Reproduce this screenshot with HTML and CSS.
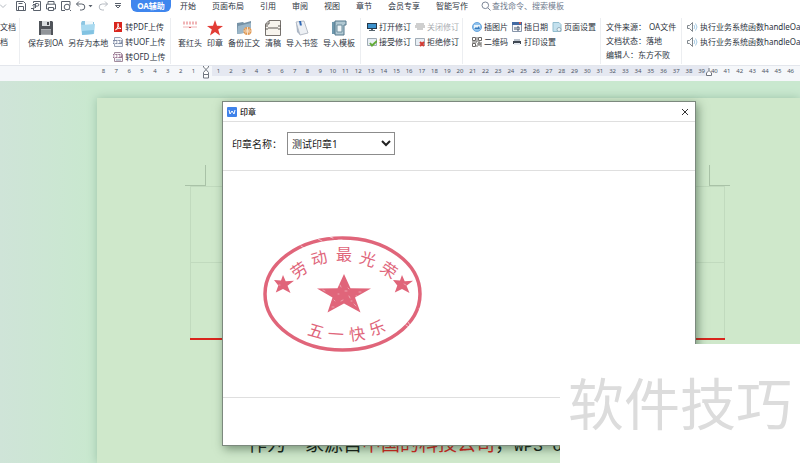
FILE: index.html
```html
<!DOCTYPE html>
<html lang="zh">
<head>
<meta charset="utf-8">
<title>印章</title>
<link rel="stylesheet" href="styles.css">
</head>
<body>
<div class="app">
  <header class="topbar">
    <div class="quick">
      <button class="tool" aria-label="展开"><svg width="8" height="12" viewBox="0 0 8 12"><path d="M0 4.500l3 3 3-3" class="ln pale"/></svg></button>
      <button class="tool save" aria-label="保存"><svg width="12" height="12" viewBox="0 0 12 12"><path d="M1.500 1.500h7l2 2v7h-9zM3.500 10.500v-4h5v4M3.500 3.500h4" class="ln"/></svg></button>
      <button class="tool" aria-label="输出"><svg width="12" height="12" viewBox="0 0 12 12"><path d="M3.500 3V1.500h7v9h-7V9M1 8.500h3V5M5.500 8V3.500h2a1.300 1.300 0 0 1 0 2.600h-2M2.500 5.500l1.500-1.500 1.500 1.500" class="ln"/></svg></button>
      <button class="tool" aria-label="打印"><svg width="12" height="12" viewBox="0 0 12 12"><path d="M3 4V1.500h6V4M3 9H1.500V4.200h9V9H9M3.500 7.500h5v3h-5z" class="ln"/></svg></button>
      <button class="tool" aria-label="打印预览"><svg width="12" height="12" viewBox="0 0 12 12"><path d="M5 10.500H1.500v-9h8.500v4M9.500 9.500l1.500 1.500" class="ln"/><circle cx="7" cy="7" r="2.800" class="ln"/></svg></button>
      <button class="tool" aria-label="撤销"><svg width="12" height="12" viewBox="0 0 12 12"><path d="M4 1.500L1.500 4 4 6.500M1.500 4h5.300a3 3 0 0 1 0 6H5" class="ln"/></svg></button>
      <button class="tool" aria-label="撤销列表"><svg width="5" height="12" viewBox="0 0 5 12"><path d="M.500 5h4l-2 2.300z" fill="#59606b"/></svg></button>
      <button class="tool redo" aria-label="恢复"><svg width="12" height="12" viewBox="0 0 12 12"><path d="M8 1.500L10.500 4 8 6.500M10.500 4H5.200a3 3 0 0 0 0 6H7" class="ln pale"/></svg></button>
      <button class="tool more" aria-label="更多"><svg width="8" height="12" viewBox="0 0 8 12"><path d="M1 3.500h6M1.500 5.500h5L4 8z" class="ln thin"/></svg></button>
    </div>
    <nav class="tabs">
      <a href="#oa" class="tab active">OA辅助</a>
      <a href="#home" class="tab">开始</a>
      <a href="#layout" class="tab">页面布局</a>
      <a href="#refs" class="tab">引用</a>
      <a href="#review" class="tab">审阅</a>
      <a href="#view" class="tab">视图</a>
      <a href="#section" class="tab">章节</a>
      <a href="#vip" class="tab">会员专享</a>
      <a href="#smart" class="tab">智能写作</a>
    </nav>
    <label class="search">
      <svg width="10" height="10" viewBox="0 0 10 10"><circle cx="4.300" cy="4.300" r="3.300" class="ln soft"/><path d="M6.800 6.800L9.500 9.500" class="ln soft"/></svg>
      <input type="text" placeholder="查找命令、搜索模板" aria-label="查找命令、搜索模板">
    </label>
  </header>

  <div class="ribbon">
    <div class="group cut">
      <button class="cmd">文档</button>
      <button class="cmd">档</button>
    </div>
    <div class="group files">
      <button class="big"><svg width="16" height="16" viewBox="0 0 16 16"><path d="M1 1h13l1 1v13H1z" fill="#50545a"/><path d="M4 1h8v5H4z" fill="#d9dde0"/><path d="M9 2h2v3H9z" fill="#45494f"/><path d="M3 9h10v6H3z" fill="#aaaeb2"/><path d="M3 11h10M3 13h10" stroke="#777b80"/></svg>保存到OA</button>
      <button class="big"><svg width="16" height="16" viewBox="0 0 16 16"><path d="M1 3l1-2h4l1 1h7v11H2z" fill="#8dc6e2"/><path d="M5 1h8v9H5z" fill="#f2f8fa"/><path d="M1 5l14-1-1 10-12 1z" fill="#a9daf0"/><path d="M2 11l12-1-.400 4L2 15z" fill="#82c3e2"/></svg>另存为本地</button>
      <div class="stack">
        <button class="cmd"><svg width="10" height="10" viewBox="0 0 10 10"><path d="M1 0h8v10H1z" fill="#d9251d"/><path d="M2.500 8C5 6 5.500 3 5 1.500 4.500 4.500 6 6.500 8 6.500 6 6 4 6.500 2.500 8z" class="wl"/></svg>转PDF上传</button>
        <button class="cmd"><svg width="10" height="10" viewBox="0 0 10 10"><path d="M1.500.500h6l2 2v7h-8z" fill="#f4f6fa" stroke="#98a2b5"/><path d="M0 3h9v4H0z" fill="#7f8ba5"/><path d="M1 4v2h1.500V4M4 4h1.500v2H4zM7 6V4h1.500" class="wl"/></svg>转UOF上传</button>
        <button class="cmd"><svg width="10" height="10" viewBox="0 0 10 10"><path d="M1.500.500h6l2 2v7h-8z" fill="#f8f4f7" stroke="#a28b9d"/><path d="M0 2h9v4H0z" fill="#9c7693"/><path d="M1 3h1.500v2H1zM4 5V3h1.500v2zM7 5V3h1.500" class="wl"/><path d="M3 8h5" stroke="#8e9ab5"/></svg>转OFD上传</button>
      </div>
    </div>
    <div class="group inserts">
      <button class="big"><svg width="16" height="16" viewBox="0 0 16 16"><path d="M1 3h14" stroke="#f0b4b6" stroke-width="3" stroke-dasharray="2 1"/><path d="M1 7h14" stroke="#f0b4b6"/><path d="M7 7h2v1H7z" fill="#d96063"/></svg>套红头</button>
      <button class="big"><svg width="16" height="16" viewBox="0 0 16 16"><path d="M8 0l2 5.800 6 .100-4.800 3.700L13 15.500 8 12l-5 3.500 1.800-5.900L0 5.900l6-.100z" fill="#e23c35"/></svg>印章</button>
      <button class="big"><svg width="16" height="16" viewBox="0 0 16 16"><path d="M1 3l6-1 1 1 7-2v11L1 14z" fill="#7692a6"/><path d="M2 6l13-3v9L1 14z" fill="#9bb6c8"/><circle cx="11.500" cy="11" r="4" fill="#df9650"/><path d="M11.500 7v8M7.500 11h8M9 8.500l5 5M14 8.500l-5 5" stroke="#f7dfc5"/></svg>备份正文</button>
      <button class="big"><svg width="16" height="16" viewBox="0 0 16 16"><path d="M.500 4L4 .500h11.500v15H.500z" fill="#f7f4ee" stroke="#77726e"/><path d="M0 6h3M13 6h3M0 9h3M13 9h3M3 8h10M1 4h3V1" fill="none" stroke="#5d5855"/></svg>清稿</button>
      <button class="big"><svg width="16" height="16" viewBox="0 0 16 16"><path d="M2 2l8-1 4 12-8 2z" fill="#edf0f4" stroke="#b7bdc7"/><path d="M2 2l4 13-3-3z" fill="#abb6c5"/><path d="M5 1l2 0 1 5-1-1-1 1z" fill="#2e67b4"/></svg>导入书签</button>
      <button class="big"><svg width="16" height="16" viewBox="0 0 16 16"><path d="M1 2l11-1v13H1z" fill="#6e98ad"/><path d="M4 1h11v4h-2v10H4z" fill="#b0c8d2" stroke="#55798c"/><path d="M6 5h5v7H6z" fill="#eff5f7" stroke="#6c8d9d"/></svg>导入模板</button>
    </div>
    <div class="group grid two">
      <button class="cmd"><svg width="10" height="10" viewBox="0 0 10 10"><path d="M0 1h10v6H0z" fill="#26394c"/><path d="M1 2h8v4H1z" fill="#3b91cc"/><path d="M4 7h2v1h2v1H2V8h2z" fill="#56636d"/></svg>打开修订</button>
      <button class="cmd" disabled><svg width="10" height="10" viewBox="0 0 10 10"><path d="M1 1h8v2H1zM0 3h10v3H0zM2 6h6v2H2z" fill="#cfcfcf"/></svg>关闭修订</button>
      <button class="cmd"><svg width="10" height="10" viewBox="0 0 10 10"><path d="M.500 1.500h9v7h-9z" fill="#e8eff5" stroke="#a0abb5"/><path d="M3 6l2 2.500L10 4" fill="none" stroke="#64ac38" stroke-width="2"/></svg>接受修订</button>
      <button class="cmd"><svg width="10" height="10" viewBox="0 0 10 10"><path d="M.500 1.500h9v7h-9z" fill="#e8eff5" stroke="#a0abb5"/><path d="M5 5l4 4M9 5L5 9" stroke="#d33a32" stroke-width="2"/></svg>拒绝修订</button>
    </div>
    <div class="group grid three">
      <button class="cmd"><svg width="10" height="10" viewBox="0 0 10 10"><circle cx="5" cy="5" r="4.500" fill="#8fc2ee" stroke="#69a5dc"/><path d="M2 3h6v4H2z" fill="#eaf4fb"/><path d="M2 7l2-2 1 1 2-2 1 3z" fill="#357abd"/></svg>插图片</button>
      <button class="cmd"><svg width="10" height="10" viewBox="0 0 10 10"><path d="M.500.500h9v9h-9z" fill="#f6f7fa" stroke="#8795aa"/><path d="M0 0h10v3H0z" fill="#426aa3"/><path d="M7 0h2v2H7z" fill="#d3584b"/><path d="M3 5v3M5 5h2v3H5z" fill="none" stroke="#45546b"/></svg>插日期</button>
      <button class="cmd"><svg width="10" height="10" viewBox="0 0 10 10"><path d="M1 .500h6l2 2v7H1z" fill="#c4e1ee" stroke="#92bdce"/><circle cx="7" cy="7.500" r="2" fill="#ecf5f8" stroke="#92adbb"/></svg>页面设置</button>
      <button class="cmd"><svg width="10" height="10" viewBox="0 0 10 10"><path d="M.500.500h3v3h-3zM6.500.500h3v3h-3zM.500 6.500h3v3h-3zM5 0v5H0M6 6h2v2H6zM9 5v5M5 8v2M6 5h2" fill="none" stroke="#6b6866"/></svg>二维码</button>
      <button class="cmd"><svg width="10" height="10" viewBox="0 0 10 10"><path d="M2 2h6v2H2z" fill="#bac2cc"/><path d="M1 4h8v3H1z" fill="#3f4752"/><path d="M2 6h6v2H2z" fill="#e4e9ef"/></svg>打印设置</button>
    </div>
    <dl class="group info">
      <div><dt>文件来源：</dt><dd class="source">OA文件</dd></div>
      <div><dt>文档状态：</dt><dd>落地</dd></div>
      <div><dt>编辑人：</dt><dd>东方不败</dd></div>
    </dl>
    <div class="group calls">
      <button class="cmd"><svg width="11" height="10" viewBox="0 0 11 10"><path d="M.500 3.500h2l3-3v9l-3-3h-2z" fill="#fafafa" stroke="#81888e"/><path d="M7 3q1.500 2 0 4M8.500 1.500q3 3.500 0 7" fill="none" stroke="#a6cbe4"/></svg>执行业务系统函数handleOaF</button>
      <button class="cmd"><svg width="11" height="10" viewBox="0 0 11 10"><path d="M.500 3.500h2l3-3v9l-3-3h-2z" fill="#fafafa" stroke="#81888e"/><path d="M7 3q1.500 2 0 4M8.500 1.500q3 3.500 0 7" fill="none" stroke="#a6cbe4"/></svg>执行业务系统函数handleOaF</button>
    </div>
  </div>

  <div class="ruler">
    <div class="scale before"><span>8</span><span>7</span><span>6</span><span>5</span><span>4</span><span>3</span><span>2</span><span>1</span></div>
    <svg class="indent" width="8" height="16" viewBox="0 0 8 16"><path d="M1.500.500h5v1.500L4 4.500 1.500 2zM4 4.500l2.500 3v2h-5v-2zM1.500 9.500h5v3.500h-5z" fill="#fff" stroke="#6e747e"/></svg>
    <div class="scale after"><span>1</span><span>2</span><span>3</span><span>4</span><span>5</span><span>6</span><span>7</span><span>8</span><span>9</span><span>10</span><span>11</span><span>12</span><span>13</span><span>14</span><span>15</span><span>16</span><span>17</span><span>18</span><span>19</span><span>20</span><span>21</span><span>22</span><span>23</span><span>24</span><span>25</span><span>26</span><span>27</span><span>28</span><span>29</span><span>30</span><span>31</span><span>32</span><span>33</span><span>34</span><span>35</span><span>36</span><span>37</span><span>38</span><span>39</span><span class="stop">40<svg width="6" height="8" viewBox="0 0 6 8"><path d="M3 0v2.500L.500 5v2.500h5V5L3 2.500" fill="#fff" stroke="#6e747e"/></svg></span><span>41</span><span>42</span><span>43</span><span>44</span><span>45</span><span>46</span></div>
  </div>

  <main class="workspace">
    <article class="sheet">
      <div class="corners"><i class="corner left"></i><i class="corner right"></i></div>
      <div class="frame"><div class="cell"></div><div class="cell"></div></div>
      <p class="body-text">作为一家源自<em>中国的科技公司</em>，<span class="latin">WPS O</span></p>
    </article>
  </main>

  <section class="dialog" role="dialog" aria-labelledby="dialog-title">
    <header class="dialog-title">
      <svg width="10" height="10" viewBox="0 0 10 10"><rect width="10" height="10" rx="1" fill="#3f82ea"/><path d="M2 3l1 4 2-3 2 3 1-4" class="wl"/></svg>
      <h1 id="dialog-title">印章</h1>
      <button class="close" aria-label="关闭"><svg width="8" height="8" viewBox="0 0 8 8"><path d="M1 1l6 6M7 1L1 7" stroke="#333"/></svg></button>
    </header>
    <form class="dialog-form">
      <label for="seal">印章名称：</label>
      <select id="seal"><option>测试印章1</option></select>
    </form>
    <div class="preview">
      <svg class="seal" width="160" height="116" viewBox="0 0 160 116">
        <g fill="#e0657a">
          <ellipse cx="79.500" cy="58" rx="77.500" ry="56" fill="none" stroke="#e0657a" stroke-width="3.500"/>
          <path d="M81 38l6.500 14.200L108 52.500 92 61.500l5.500 15L81 67.500l-16.500 9 5-15L54 52.500l20.500-.300z"/>
          <path id="small-star" d="M20 39l2.700 6.200 8.300-.400-6.500 5 3 7.200-7.500-4-7.200 3.500 2.500-7L11 44l7 .500z"/>
          <use href="#small-star" x="119"/>
          <g class="seal-text">
            <text transform="translate(36 34) rotate(-34)" y="6">劳</text>
            <text transform="translate(56 22) rotate(-16)" y="6">动</text>
            <text transform="translate(81 18)" y="6">最</text>
            <text transform="translate(105 23) rotate(18)" y="6">光</text>
            <text transform="translate(126 34) rotate(34)" y="6">荣</text>
            <text transform="translate(53 95) rotate(16)" y="6">五</text>
            <text transform="translate(73 98) rotate(4)" y="6">一</text>
            <text transform="translate(94 98) rotate(-8)" y="6">快</text>
            <text transform="translate(114 92) rotate(-20)" y="6">乐</text>
          </g>
        </g>
        <g fill="none" stroke="#fff" stroke-linecap="round">
          <path d="M38 10l3 2M55 3l4 2M67 1l3 1M75 4h4M145 86l2 3M143 89l3 2M156 73l2 1" stroke-width="1" opacity=".6"/>
          <path d="M60 54l2 1M77 49l1 2M82 55l2 0M86 60l1 2M78 65l2-1M91 68l2 2M71 64l1 1M85 52l1 1M96 56l2 0M69 71l2 0M75 58l1 0M88 65l1 0M93 60l1 0M16 49l1 0M141 48l2 1" stroke-width=".8" opacity=".5"/>
        </g>
      </svg>
    </div>
    <footer class="dialog-foot"></footer>
  </section>

  <aside class="watermark">软件技巧</aside>
</div>
</body>
</html>
```

FILE: styles.css
```css
* { box-sizing: border-box; }

html, body { height: 100%; }

body {
  margin: 0;
  font: 8px/12px "Noto Sans", "Noto Sans CJK SC", sans-serif;
  color: #2c333e;
}

button, input, select {
  font: inherit;
  color: inherit;
}

button {
  padding: 0;
  border: 0;
  background: none;
  white-space: nowrap;
}

svg { display: block; flex: none; }

.ln { fill: none; stroke: #59606b; }
.pale { stroke: #b5bac1; }
.soft { stroke: #7d8798; }
.thin { stroke-width: 1; }
.wl { fill: none; stroke: #fff; }

.app {
  position: relative;
  display: flex;
  flex-direction: column;
  height: 100vh;
  overflow: hidden;
  background: #fff;
}

/* Top bar */
.topbar {
  display: flex;
  align-items: center;
  height: 12px;
  flex: none;
}

.quick {
  display: flex;
  gap: 3px;
  width: 131px;
}

.save { margin-left: 4px; }
.tool:nth-child(7) { margin-left: -2px; }
.redo { margin-left: 1px; }
.more { margin-left: 2px; }

.tabs { display: flex; gap: 16px; }

.tab {
  color: inherit;
  text-decoration: none;
  white-space: nowrap;
}

.active {
  width: 40px;
  margin-right: -7px;
  border-radius: 0 0 6px 6px;
  background: #3f86ee;
  color: #fff;
  font-weight: 700;
  text-align: center;
}

.search {
  display: flex;
  align-items: center;
  gap: 1px;
  margin-left: 13px;
}

.search input {
  width: 90px;
  height: 12px;
  padding: 0;
  border: 0;
  background: none;
}

.search input::placeholder { color: #6f7a8d; opacity: 1; }

/* Ribbon */
.ribbon {
  display: flex;
  height: 53px;
  padding-top: 6px;
  flex: none;
  overflow: hidden;
}

.group {
  flex: none;
  height: 46px;
  margin: 0;
  border-right: 1px solid #eceef1;
}

.cut {
  display: flex;
  flex-direction: column;
  width: 20px;
  padding-top: 3px;
  gap: 3px;
}

.cmd {
  display: flex;
  align-items: center;
  gap: 2px;
  height: 12px;
}

.cmd:disabled { color: #a9adb2; }

.big {
  display: flex;
  flex-direction: column;
  align-items: center;
  gap: 1px;
  padding-top: 2px;
}

.files {
  display: flex;
  align-items: flex-start;
  gap: 5px;
  width: 151px;
  padding-left: 8px;
}

.stack {
  display: flex;
  flex-direction: column;
  gap: 3px;
  padding-top: 3px;
}

.inserts {
  display: flex;
  align-items: flex-start;
  gap: 5px;
  width: 190px;
  padding-left: 7px;
}

.grid {
  display: grid;
  grid-auto-rows: 12px;
  justify-content: start;
  align-content: start;
  gap: 3px 4px;
  padding-top: 3px;
}

.two {
  grid-template-columns: auto auto;
  width: 102px;
  padding-left: 6px;
}

.three {
  grid-template-columns: auto auto auto;
  width: 138px;
  padding-left: 9px;
}

.three .cmd:nth-child(5) { grid-column: span 2; }

.info {
  width: 81px;
  padding: 3px 0 0 5px;
}

.info div { display: flex; height: 14px; white-space: nowrap; }
.info dd { margin: 0; }
.info .source { margin-left: 3px; }

.calls {
  display: flex;
  flex-direction: column;
  gap: 3px;
  padding: 3px 0 0 5px;
  border: 0;
}

/* Ruler */
.ruler {
  display: flex;
  height: 16px;
  flex: none;
  padding-left: 97px;
  border-top: 1px solid #e3e6ec;
  background: #f5f7fa;
  overflow: hidden;
}

.scale {
  display: grid;
  grid-auto-flow: column;
  grid-auto-columns: 1fr;
  flex: none;
  height: 10px;
  font-size: 6px;
  line-height: 10px;
  text-align: center;
  color: #4e5665;
}

.before { width: 103px; }
.indent { margin: -1px 2px 0; }

.after {
  width: 585px;
  background: linear-gradient(90deg, #e5e8f1 497px, transparent 497px);
}

.stop { position: relative; }
.stop svg { position: absolute; left: -2px; top: 2px; }

/* Document */
.workspace {
  flex: 1;
  padding: 17px 0 0 97px;
  background: linear-gradient(90deg, #cfe4d8, #c9e8cf 90px, #c9e8cf);
  overflow: hidden;
}

.sheet {
  height: 100%;
  padding: 67px 75px 0 93px;
  background: #cfe8cb;
  box-shadow: 0 0 9px #9cc3a8;
}

.corners {
  display: flex;
  justify-content: space-between;
  margin: 0 -5px;
}

.corner {
  width: 21px;
  height: 21px;
  border-bottom: 1px solid #a9c2a7;
}

.corner.left { border-right: 1px solid #a9c2a7; }
.corner.right { border-left: 1px solid #a9c2a7; }

.frame { border-bottom: 2px solid #d9251d; }

.cell {
  height: 76px;
  border: 1px solid #c1dabe;
  border-bottom: 0;
}

.body-text {
  margin: 90px 0 0 58px;
  font-size: 19px;
  line-height: 28px;
  color: #171c17;
  white-space: nowrap;
}

.body-text em { font-style: normal; color: #d9251d; }
.latin { font: 16px "Liberation Mono", monospace; }

/* Seal dialog */
.dialog {
  position: absolute;
  top: 101px;
  bottom: 17px;
  left: 222px;
  right: 104px;
  display: flex;
  flex-direction: column;
  border: 1px solid #7c897e;
  background: #fff;
  box-shadow: 2px 3px 9px rgba(30, 60, 35, .5);
}

.dialog-title {
  display: flex;
  align-items: center;
  gap: 3px;
  height: 20px;
  padding: 0 6px 0 4px;
  border-bottom: 1px solid #dfdfdf;
}

.dialog-title h1 {
  margin: 0;
  font-size: 8px;
  font-weight: 500;
  color: #111;
}

.close { margin-left: auto; }

.dialog-form {
  display: flex;
  align-items: center;
  gap: 5px;
  height: 49px;
  padding: 0 9px 5px;
  border-bottom: 1px solid #dfdfdf;
  font-size: 10px;
  color: #222;
}

.dialog-form select {
  width: 108px;
  height: 23px;
  padding: 0;
  border: 1px solid #8c8c8c;
  border-radius: 0;
  background: #fff;
}

.preview { flex: 1; padding: 65px 40px 0; }

.seal-text {
  font: 16px "Noto Sans CJK SC", sans-serif;
  font-weight: 400;
  text-anchor: middle;
}

.dialog-foot { height: 48px; border-top: 1px solid #dfdfdf; }

.watermark {
  position: absolute;
  right: 0;
  bottom: 0;
  padding: 0 8px;
  background: #fff;
  color: #dcdcdc;
  font-size: 56px;
  line-height: 119px;
  white-space: nowrap;
}
```
